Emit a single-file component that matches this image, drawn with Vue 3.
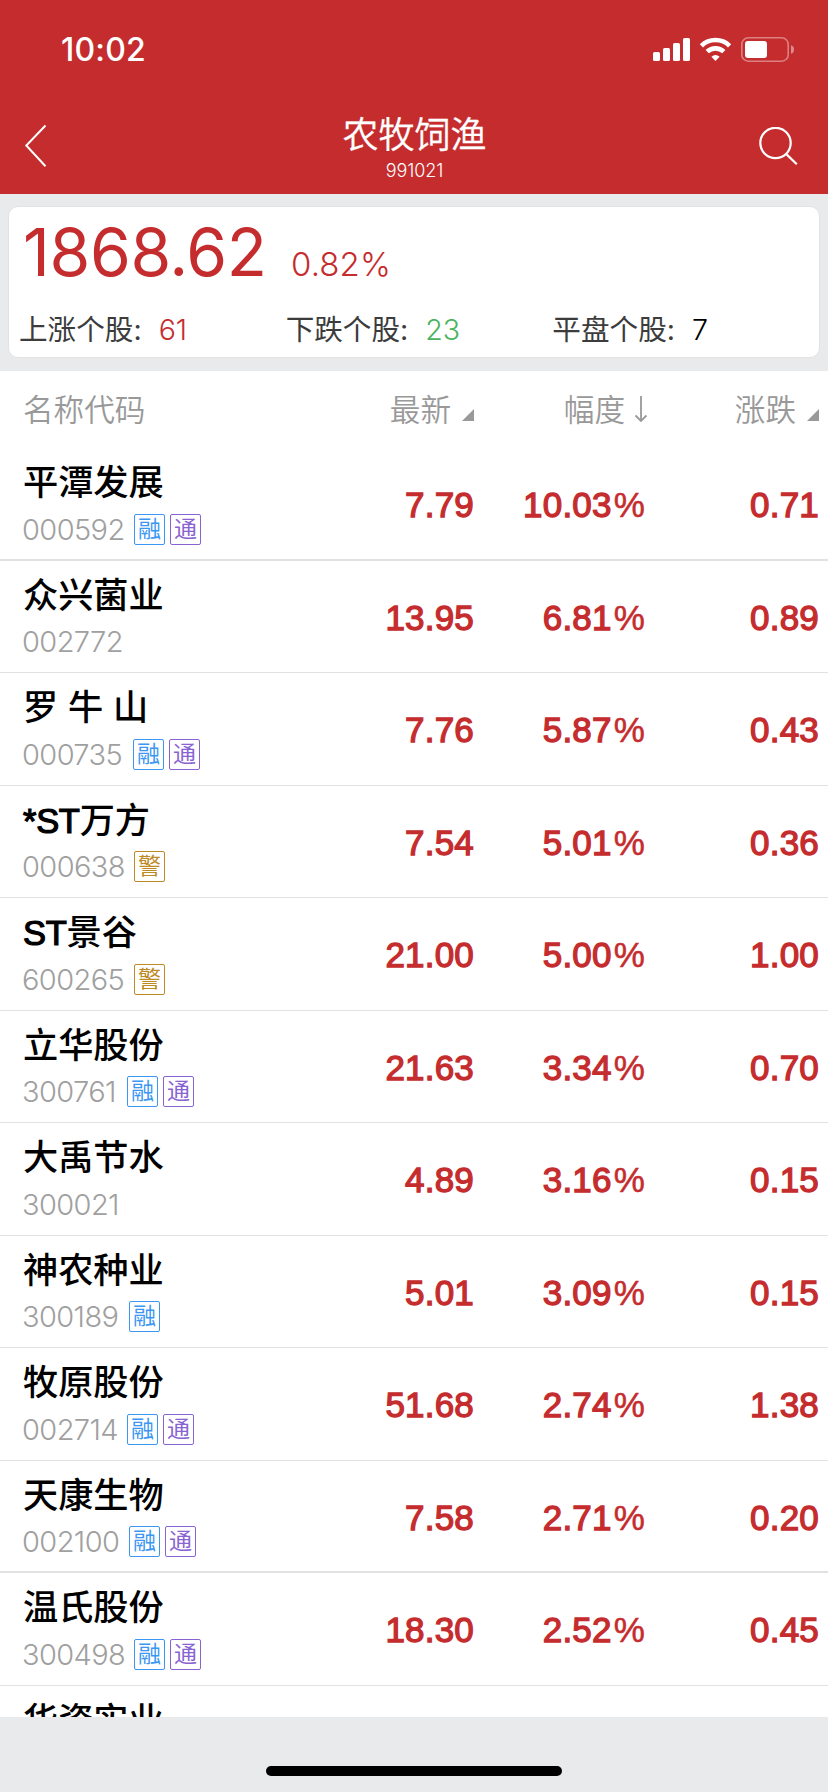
<script setup>
import { ref } from 'vue'

const index = ref({ name: '农牧饲渔', code: '991021', value: '1868.62', percent: '0.82%' })

const counts = ref([
    { label: '上涨个股:', value: '61', type: 'up' },
    { label: '下跌个股:', value: '23', type: 'down' },
    { label: '平盘个股:', value: '7', type: 'flat' }
])

// w: width of the code, the tags follow it
const stocks = ref([
    { name: '平潭发展', code: '000592', w: 111, tags: ['融', '通'], price: '7.79', percent: '10.03', change: '0.71' },
    { name: '众兴菌业', code: '002772', w: 108, tags: [], price: '13.95', percent: '6.81', change: '0.89' },
    { name: '罗 牛 山', code: '000735', w: 110, tags: ['融', '通'], price: '7.76', percent: '5.87', change: '0.43' },
    { prefix: '*ST', name: '万方', code: '000638', w: 111, tags: ['警'], price: '7.54', percent: '5.01', change: '0.36' },
    { prefix: 'ST', name: '景谷', code: '600265', w: 111, tags: ['警'], price: '21.00', percent: '5.00', change: '1.00' },
    { name: '立华股份', code: '300761', w: 104, tags: ['融', '通'], price: '21.63', percent: '3.34', change: '0.70' },
    { name: '大禹节水', code: '300021', w: 106, tags: [], price: '4.89', percent: '3.16', change: '0.15' },
    { name: '神农种业', code: '300189', w: 106, tags: ['融'], price: '5.01', percent: '3.09', change: '0.15' },
    { name: '牧原股份', code: '002714', w: 104, tags: ['融', '通'], price: '51.68', percent: '2.74', change: '1.38' },
    { name: '天康生物', code: '002100', w: 106, tags: ['融', '通'], price: '7.58', percent: '2.71', change: '0.20' },
    { name: '温氏股份', code: '300498', w: 111, tags: ['融', '通'], price: '18.30', percent: '2.52', change: '0.45' },
    { name: '华资实业', code: '', w: 0, tags: [], price: '', percent: '', change: '' }
])

const tagClass = { '融': 'blue', '通': 'purple', '警': 'gold' }
</script>
<template>
    <div class="page">
        <header>
            <div class="status">
                <span class="time">10:02</span>
                <svg class="status-icons" width="142" height="28" viewBox="0 0 142 28">
                    <g fill="#fff">
                        <rect x="0" y="16" width="7" height="9" rx="1.6" />
                        <rect x="10" y="12" width="7" height="13" rx="1.6" />
                        <rect x="20" y="7" width="7" height="18" rx="1.6" />
                        <rect x="30" y="2" width="7" height="23" rx="1.6" />
                        <rect x="92" y="5" width="22" height="17" rx="3" />
                    </g>
                    <g fill="none" stroke="#fff" stroke-width="4.6">
                        <path d="M48.4 9.8a20.2 20.2 0 0 1 28.2 0" />
                        <path d="M54.2 15.7a12 12 0 0 1 16.6 0" />
                    </g>
                    <path fill="#fff" d="M62.5 25l-4.1-4.3q4.1-3.2 8.2 0z" />
                    <rect x="88.8" y="1.8" width="46.4" height="23.4" rx="6.5" fill="none" stroke="#fff" stroke-width="1.6" opacity=".4" />
                    <path d="M138 9.2q3 1 3 4.3t-3 4.3z" fill="#fff" opacity=".45" />
                </svg>
            </div>
            <div class="nav">
                <svg class="back" width="24" height="46" viewBox="0 0 24 46">
                    <path d="M21.5 2.5L2.3 22.5l19.2 20.8" fill="none" stroke="#fff" stroke-width="2" />
                </svg>
                <div class="title">
                    <h1>{{ index.name }}</h1>
                    <span>{{ index.code }}</span>
                </div>
                <svg class="search" width="40" height="40" viewBox="0 0 40 40">
                    <g fill="none" stroke="#fff" stroke-width="2.2">
                        <circle cx="16.5" cy="16" r="15.2" />
                        <path d="M26.8 26.6l11 10.6" />
                    </g>
                </svg>
            </div>
        </header>
        <section class="summary">
            <div class="card">
                <div class="quote">
                    <span class="value">{{ index.value }}</span>
                    <span class="percent">{{ index.percent }}</span>
                </div>
                <div class="counts">
                    <div v-for="item in counts" :key="item.type" class="count">
                        <span>{{ item.label }}</span>
                        <b :class="item.type">{{ item.value }}</b>
                    </div>
                </div>
            </div>
        </section>
        <div class="grid head">
            <span>名称代码</span>
            <span class="sort">最新<i class="corner"></i></span>
            <span class="sort desc">幅度<svg width="14" height="27" viewBox="0 0 14 27"><path d="M7 0v25M1.5 19.5L7 25l5.5-5.5" fill="none" stroke="#999" stroke-width="1.8" /></svg></span>
            <span class="sort">涨跌<i class="corner"></i></span>
        </div>
        <main>
            <div v-for="(item, i) in stocks" :key="item.name" class="grid row" :class="{ thick: i % 9 == 0 }">
                <div class="stock">
                    <p class="name"><span v-if="item.prefix" class="prefix">{{ item.prefix }}</span>{{ item.name }}</p>
                    <div v-if="item.code" class="info">
                        <span class="code" :style="{ width: item.w + 'px' }">{{ item.code }}</span>
                        <span v-for="tag in item.tags" :key="tag" class="tag" :class="tagClass[tag]">{{ tag }}</span>
                    </div>
                </div>
                <span class="num">{{ item.price }}</span>
                <span class="num">{{ item.percent }}<span v-if="item.percent" class="unit">%</span></span>
                <span class="num">{{ item.change }}</span>
            </div>
        </main>
        <footer><div class="home"></div></footer>
    </div>
</template>
<style>
body{
    margin: 0;
    background-color: #e9eaec;
}
</style>
<style scoped>
.page{
    width: 828px;
    height: 1792px;
    display: flex;
    flex-direction: column;
    overflow: hidden;
    background-color: white;
    font-family: Inter, "Noto Sans CJK SC", sans-serif;
}
header{
    height: 194px;
    flex: none;
    background-color: #c52c2e;
    color: white;
}
.status{
    height: 100px;
    box-sizing: border-box;
    padding: 0 33px 0 61px;
    display: flex;
    justify-content: space-between;
}
.time{
    font-size: 32px;
    line-height: 39px;
    margin-top: 30px;
    font-weight: 550;
    letter-spacing: 0.2px;
}
.status-icons{
    margin-top: 36px;
}
.nav{
    height: 94px;
    padding: 0 29px 0 24px;
    display: flex;
    justify-content: space-between;
}
.back{
    margin-top: 23px;
    margin-right: 22px;
}
.search{
    margin-top: 27px;
}
.title{
    text-align: center;
}
h1{
    margin: 12px 0 0;
    font-size: 36px;
    line-height: 46px;
    font-weight: 350;
    -webkit-text-stroke: 0.3px white;
}
.title span{
    display: block;
    font-size: 18px;
    line-height: 24px;
    margin-top: 1px;
    font-weight: 300;
    letter-spacing: -0.1px;
}
.summary{
    height: 177px;
    box-sizing: border-box;
    flex: none;
    padding: 12px 8px 0;
    background-color: #e9eaec;
}
.card{
    height: 152px;
    box-sizing: border-box;
    border: 1px solid #e2e2e2;
    border-radius: 10px;
    background-color: white;
    color: #c52c2e;
}
.quote{
    height: 86px;
    display: flex;
    align-items: baseline;
    padding-left: 14px;
}
.value{
    font-size: 66px;
    line-height: 90px;
    width: 268px;
    letter-spacing: -0.4px;
}
.percent{
    font-size: 33px;
    font-weight: 350;
    letter-spacing: 0.1px;
}
.counts{
    display: flex;
    padding-left: 10px;
    color: #3c3c3c;
    font-size: 28.6px;
    line-height: 40px;
    margin-top: 17px;
}
.count{
    width: 268px;
    display: flex;
    gap: 17px;
    font-weight: 400;
}
.count b{
    font-weight: 350;
}
.count .up{
    color: #c52c2e;
}
.count .down{
    color: #4bb35e;
}
.count .flat{
    color: black;
}
.grid{
    display: grid;
    grid-template-columns: 1fr 200px 171px 174px;
    padding: 0 9px 0 23px;
    box-sizing: border-box;
}
.head{
    height: 77px;
    flex: none;
    align-items: center;
    padding-bottom: 4px;
    color: #999;
    font-size: 30.6px;
    font-weight: 350;
}
.sort{
    display: flex;
    justify-content: flex-end;
    align-items: center;
}
.corner{
    width: 12px;
    height: 12px;
    margin: 15px 0 0 11px;
    background-color: #999;
    clip-path: polygon(100% 0, 100% 100%, 0 100%);
}
.desc{
    margin-right: -3px;
}
.desc svg{
    margin: 3px 0 0 9px;
}
main{
    height: 1269px;
    flex: none;
    overflow: hidden;
}
.row{
    height: 112.5px;
    border-bottom: 1px solid #e2e2e3;
}
.row.thick{
    border-bottom-width: 2px;
}
.name{
    margin: 12px 0 0;
    font-family: "Liberation Sans", "Noto Sans CJK SC", sans-serif;
    font-size: 35.2px;
    line-height: 46px;
    font-weight: 500;
    white-space: nowrap;
    color: black;
}
.prefix{
    font-size: 34.5px;
    letter-spacing: -0.3px;
    -webkit-text-stroke: 1.2px black;
}
.info{
    height: 32px;
    margin-top: 7px;
    display: flex;
    align-items: center;
}
.code{
    color: #a0a0a0;
    font-size: 29px;
    font-weight: 300;
    letter-spacing: -0.6px;
    text-indent: -1px;
}
.tag{
    width: 31px;
    height: 31px;
    box-sizing: border-box;
    margin-right: 5px;
    border: 1px solid;
    border-radius: 2px;
    font-size: 23px;
    line-height: 28px;
    text-align: center;
    font-weight: 400;
}
.blue{
    color: #3b97f3;
}
.purple{
    color: #8a63d2;
}
.gold{
    color: #be8a25;
}
.num{
    margin-top: 35px;
    height: 44px;
    line-height: 44px;
    font-family: "Liberation Sans", sans-serif;
    font-size: 35px;
    letter-spacing: 0.2px;
    -webkit-text-stroke: 1.3px #c52c2e;
    text-align: right;
    color: #c52c2e;
}
.unit{
    margin-left: 2px;
    -webkit-text-stroke: 0.5px #c52c2e;
}
footer{
    flex: 1;
    display: flex;
    justify-content: center;
    align-items: flex-end;
    background-color: #e9eaec;
}
.home{
    width: 296px;
    height: 10px;
    margin-bottom: 16px;
    border-radius: 5px;
    background-color: black;
}
</style>
